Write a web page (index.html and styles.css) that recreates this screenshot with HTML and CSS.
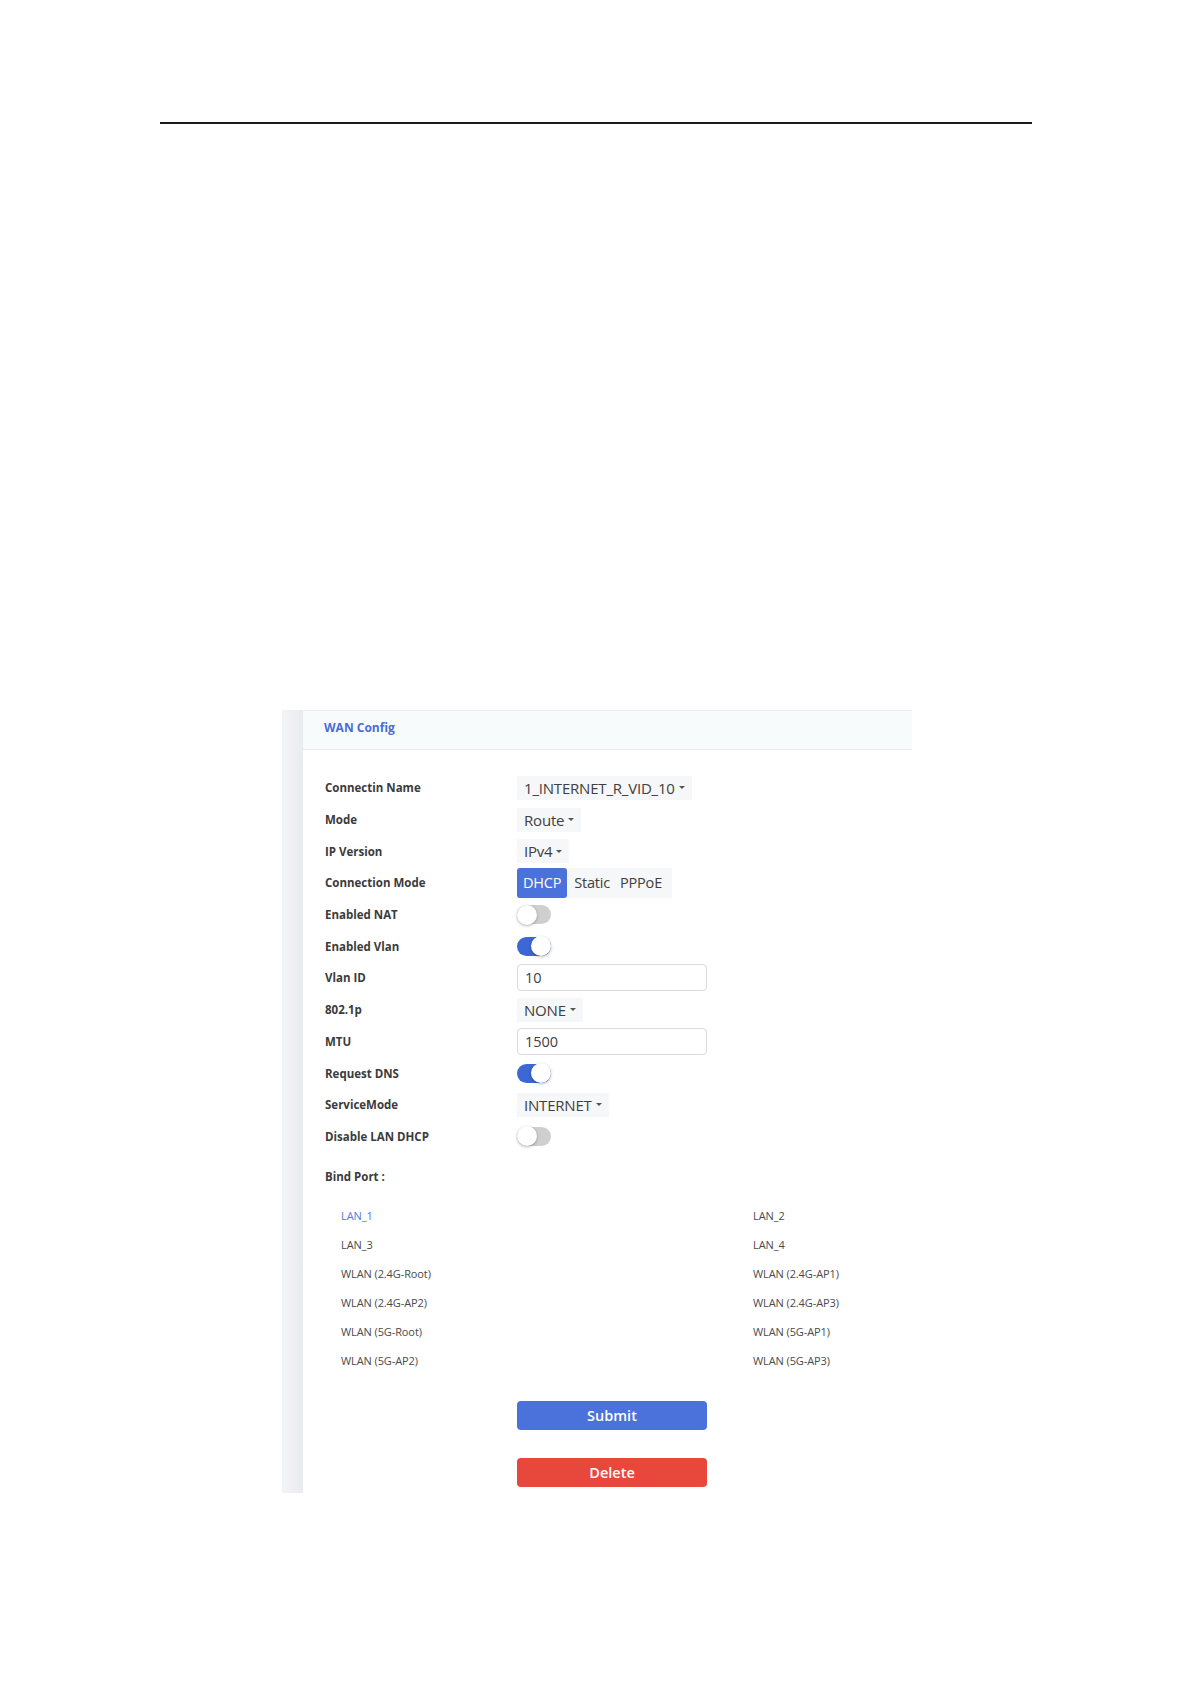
FILE: index.html
```html
<!DOCTYPE html>
<html lang="en">
<head>
  <meta charset="UTF-8">
  <meta name="viewport" content="width=device-width, initial-scale=1.0">
  <title>WAN Config</title>
  <link rel="stylesheet" href="styles.css">
</head>
<body>
  <div class="page-rule"></div>

  <div class="panel">
    <div class="panel-side"></div>
    <div class="panel-main">
      <div class="panel-head">WAN Config</div>

      <div class="form">
        <div class="form-row">
          <div class="label">Connectin Name</div>
          <div class="select">1_INTERNET_R_VID_10<span class="caret"></span></div>
        </div>
        <div class="form-row">
          <div class="label">Mode</div>
          <div class="select">Route<span class="caret"></span></div>
        </div>
        <div class="form-row">
          <div class="label">IP Version</div>
          <div class="select">IPv4<span class="caret"></span></div>
        </div>
        <div class="form-row">
          <div class="label">Connection Mode</div>
          <div class="segment">
            <span class="seg-item active">DHCP</span>
            <span class="seg-item">Static</span>
            <span class="seg-item">PPPoE</span>
          </div>
        </div>
        <div class="form-row">
          <div class="label">Enabled NAT</div>
          <div class="switch"><span class="knob"></span></div>
        </div>
        <div class="form-row">
          <div class="label">Enabled Vlan</div>
          <div class="switch on"><span class="knob"></span></div>
        </div>
        <div class="form-row">
          <div class="label">Vlan ID</div>
          <input class="text-input" type="text" value="10">
        </div>
        <div class="form-row">
          <div class="label">802.1p</div>
          <div class="select">NONE<span class="caret"></span></div>
        </div>
        <div class="form-row">
          <div class="label">MTU</div>
          <input class="text-input" type="text" value="1500">
        </div>
        <div class="form-row">
          <div class="label">Request DNS</div>
          <div class="switch on"><span class="knob"></span></div>
        </div>
        <div class="form-row">
          <div class="label">ServiceMode</div>
          <div class="select">INTERNET<span class="caret"></span></div>
        </div>
        <div class="form-row">
          <div class="label">Disable LAN DHCP</div>
          <div class="switch"><span class="knob"></span></div>
        </div>

        <div class="bind-title">Bind Port :</div>

        <div class="ports">
          <div class="port selected">LAN_1</div>
          <div class="port">LAN_2</div>
          <div class="port">LAN_3</div>
          <div class="port">LAN_4</div>
          <div class="port">WLAN (2.4G-Root)</div>
          <div class="port">WLAN (2.4G-AP1)</div>
          <div class="port">WLAN (2.4G-AP2)</div>
          <div class="port">WLAN (2.4G-AP3)</div>
          <div class="port">WLAN (5G-Root)</div>
          <div class="port">WLAN (5G-AP1)</div>
          <div class="port">WLAN (5G-AP2)</div>
          <div class="port">WLAN (5G-AP3)</div>
        </div>

        <div class="actions">
          <button class="btn btn-submit" type="button">Submit</button>
          <button class="btn btn-delete" type="button">Delete</button>
        </div>
      </div>
    </div>
  </div>
</body>
</html>
```

FILE: styles.css
```css
* {
  margin: 0;
  padding: 0;
  box-sizing: border-box;
}

body {
  background: #ffffff;
  font-family: "Open Sans", "Noto Sans", sans-serif;
  color: #333;
}

.page-rule {
  margin: 122px 0 0 160px;
  width: 872px;
  height: 2px;
  background: #1b1b1b;
}

.panel {
  display: flex;
  width: 630px;
  margin: 586px 0 0 282px;
}

.panel-side {
  width: 21px;
  background: linear-gradient(to right, #f3f4f6, #e9ecef);
}

.panel-main {
  flex: 1;
  background: #fff;
  padding-bottom: 6px;
}

.panel-head {
  height: 40px;
  padding: 0 0 5px 21px;
  display: flex;
  align-items: center;
  background: #f8fbfc;
  border-top: 1px solid #eceff1;
  border-bottom: 1px solid #e8ecee;
  color: #4a6cd4;
  font-size: 12px;
  font-weight: 700;
}

.form {
  padding: 22px 0 0 22px;
}

.form-row {
  display: flex;
  align-items: center;
  height: 31.7px;
}

.label {
  width: 192px;
  font-size: 11.5px;
  font-weight: 700;
  color: #3b3b3b;
}

/* dropdowns */
.select {
  display: flex;
  align-items: center;
  height: 24px;
  padding: 0 7px 0 7px;
  background: #f6f7f8;
  font-size: 15px;
  color: #404040;
  letter-spacing: -0.2px;
}

.caret {
  margin-left: 4px;
  border-left: 3px solid transparent;
  border-right: 3px solid transparent;
  border-top: 3.5px solid #555;
}

/* segmented choice */
.segment {
  display: flex;
  align-items: center;
  height: 30px;
  width: 155px;
  background: #f6f7f8;
  font-size: 14.5px;
  color: #404040;
  letter-spacing: -0.2px;
}

.seg-item {
  display: flex;
  align-items: center;
  height: 100%;
  padding: 0 5px;
}

.seg-item.active {
  background: #4a72da;
  color: #fff;
  border-radius: 3px;
  padding: 0 6px;
  margin-right: 2px;
}

/* switches */
.switch {
  position: relative;
  width: 34px;
  height: 19px;
  border-radius: 10px;
  background: #cfcfcf;
}

.switch.on {
  background: #3c67d4;
}

.knob {
  position: absolute;
  top: -0.5px;
  left: 0;
  width: 20px;
  height: 20px;
  border-radius: 50%;
  background: #fff;
  box-shadow: 0 1px 3px rgba(0, 0, 0, 0.3);
}

.switch.on .knob {
  left: 14px;
}

.text-input {
  width: 190px;
  height: 27px;
  padding: 0 7px;
  border: 1px solid #d9d9d9;
  border-radius: 4px;
  font-family: inherit;
  font-size: 14.5px;
  color: #404040;
  outline: none;
}

.bind-title {
  margin-top: 17px;
  font-size: 11.5px;
  font-weight: 700;
  color: #3b3b3b;
}

.ports {
  display: grid;
  grid-template-columns: 412px 1fr;
  grid-auto-rows: 29px;
  align-items: center;
  margin-top: 17px;
  padding-left: 16px;
  font-size: 11px;
  color: #4a4a4a;
  letter-spacing: -0.1px;
}

.port.selected {
  color: #5577d8;
}

.actions {
  display: flex;
  flex-direction: column;
  gap: 28px;
  margin: 26px 0 0 192px;
}

.btn {
  width: 190px;
  height: 29px;
  border: none;
  border-radius: 4px;
  color: #fff;
  font-family: inherit;
  font-size: 14.5px;
  font-weight: 600;
}

.btn-submit {
  background: #4a72da;
}

.btn-delete {
  background: #e8473b;
}
```
